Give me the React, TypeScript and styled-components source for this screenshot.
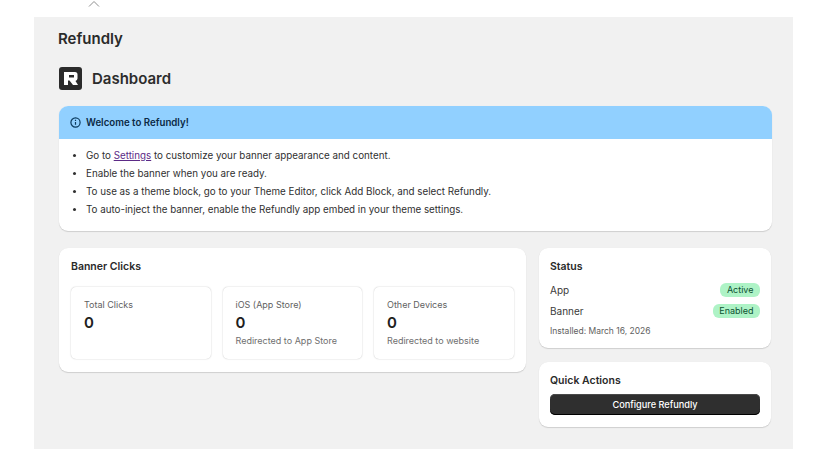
import styled, { createGlobalStyle } from 'styled-components';

const GlobalStyle = createGlobalStyle`
  html, body {
    margin: 0;
    padding: 0;
    background: #ffffff;
    font-family: Inter, "Liberation Sans", sans-serif;
    color: #303030;
  }
`;

const Page = styled.div`
  width: 828px;
  height: 466px;
  overflow: hidden;
  box-sizing: border-box;
  padding: 0 35px 17px 34px;
  display: flex;
  flex-direction: column;
`;

const TopBar = styled.div`
  height: 17px;
  padding-left: 54px;
  display: flex;
  align-items: flex-start;
  color: #8a8a8a;
`;

const Frame = styled.main`
  flex: 1;
  background: #f1f1f1;
  padding: 12px 21px 0 25px;
  display: flex;
  flex-direction: column;
`;

const AppTitle = styled.h1`
  margin: 0 0 0 -1px;
  font-size: 15px;
  line-height: 20px;
  font-weight: 600;
  color: #2a2a2a;
`;

const PageHeader = styled.div`
  margin-top: 17px;
  display: flex;
  align-items: center;
  gap: 10px;
  height: 24px;
`;

const PageTitle = styled.h2`
  margin: 0;
  font-size: 15px;
  font-weight: 600;
  color: #2c2c2c;
`;

const Card = styled.section`
  background: #ffffff;
  border-radius: 9px;
  box-shadow: 0 1px 1px rgba(0, 0, 0, 0.14), 0 0 1px rgba(0, 0, 0, 0.06);
  overflow: hidden;
`;

const Banner = styled(Card)`
  margin-top: 16px;
  height: 125px;
`;

const BannerHead = styled.div`
  height: 33px;
  background: #91d0ff;
  display: flex;
  align-items: center;
  gap: 5px;
  padding-left: 11px;
  font-size: 9.7px;
  font-weight: 600;
  color: #0b2a45;
`;

const Steps = styled.ul`
  margin: 0;
  padding: 8px 0 0 27px;
  font-size: 9.8px;
  line-height: 18px;
  color: #303030;
`;

const Step = styled.li`
  height: 18px;
  white-space: nowrap;
`;

const SettingsLink = styled.a`
  color: #5c2a86;
  text-decoration: underline;
`;

const Columns = styled.div`
  margin-top: 17px;
  display: grid;
  grid-template-columns: 467px 232px;
  gap: 13px;
  align-items: start;
`;

const ClicksCard = styled(Card)`
  height: 124px;
  box-sizing: border-box;
  padding: 12px;
`;

const CardTitle = styled.h3`
  margin: 0;
  font-size: 10.5px;
  line-height: 14px;
  font-weight: 600;
  color: #2a2a2a;
`;

const Stats = styled.div`
  margin-top: 13px;
  display: grid;
  grid-template-columns: repeat(3, 139.5px);
  gap: 12px;
`;

const Stat = styled.div`
  height: 72px;
  box-sizing: border-box;
  padding: 12px 12px 0 13px;
  background: #ffffff;
  border-radius: 5px;
  box-shadow: 0 0 1.5px rgba(0, 0, 0, 0.28);
`;

const StatLabel = styled.div`
  font-size: 9px;
  line-height: 12px;
  color: #616161;
`;

const StatValue = styled.div`
  margin-top: 1px;
  font-size: 15px;
  line-height: 22px;
  font-weight: 600;
  color: #202020;
`;

const StatNote = styled.div`
  margin-top: 1px;
  font-size: 9px;
  line-height: 12px;
  color: #6f6f6f;
`;

const SideColumn = styled.div`
  display: flex;
  flex-direction: column;
  gap: 14px;
`;

const StatusCard = styled(Card)`
  height: 100px;
  box-sizing: border-box;
  padding: 12px 11px 0 11px;
`;

const StatusRow = styled.div`
  display: flex;
  justify-content: space-between;
  align-items: center;
  height: 21px;
  font-size: 10px;
  color: #3a3a3a;
`;

const StatusRows = styled.div`
  margin-top: 5px;
`;

const Pill = styled.span`
  background: #aef3c6;
  color: #0c5132;
  font-size: 9px;
  line-height: 14px;
  padding: 0 6.500px;
  border-radius: 6px;
`;

const Installed = styled.div`
  margin-top: 4px;
  font-size: 8.5px;
  line-height: 12px;
  color: #616161;
`;

const ActionsCard = styled(Card)`
  height: 65px;
  box-sizing: border-box;
  padding: 12px 11px 0 11px;
`;

const ConfigureButton = styled.button`
  display: block;
  width: 100%;
  height: 21px;
  margin-top: 6px;
  padding: 0;
  border: 0;
  border-radius: 5px;
  background: #2f2f2f;
  box-shadow: inset 0 -1px 0 #000000, inset 0 1px 0 #4a4a4a;
  color: #ffffff;
  font-family: inherit;
  font-size: 9.2px;
  font-weight: 500;
`;

const Logo = () => (
  <svg width="23" height="23" viewBox="0 0 23 23" aria-hidden="true">
    <rect width="23" height="23" rx="3" fill="#2b2b2b" />
    <path d="M5 5h11a2.500 2.500 0 0 1 2.500 2.500v4a2.500 2.500 0 0 1-2 2.400L19 18h-5l-3.500-4.500H9V18H5z" fill="#ffffff" />
    <path d="M10 8h5v2.500h-5z" fill="#2b2b2b" />
  </svg>
);

const InfoIcon = () => (
  <svg width="11" height="11" viewBox="0 0 11 11" fill="none" stroke="#0b3a5e" strokeWidth="1.200" aria-hidden="true">
    <circle cx="5.500" cy="5.500" r="4.600" />
    <path d="M5.500 5v2.800M5.500 2.800v1.100" />
  </svg>
);

const Chevron = () => (
  <svg width="12" height="8" viewBox="0 0 12 8" fill="none" stroke="#8f8f8f" strokeWidth="1" aria-hidden="true">
    <path d="M1 6.500 6 1.500l5 5" />
  </svg>
);

const stats = [
  { label: 'Total Clicks', value: '0', note: '' },
  { label: 'iOS (App Store)', value: '0', note: 'Redirected to App Store' },
  { label: 'Other Devices', value: '0', note: 'Redirected to website' },
];

export default function App() {
  return (
    <>
      <GlobalStyle />
      <Page>
        <TopBar>
          <Chevron />
        </TopBar>
        <Frame>
          <AppTitle>Refundly</AppTitle>
          <PageHeader>
            <Logo />
            <PageTitle>Dashboard</PageTitle>
          </PageHeader>
          <Banner>
            <BannerHead>
              <InfoIcon />
              Welcome to Refundly!
            </BannerHead>
            <Steps>
              <Step>
                Go to <SettingsLink href="#">Settings</SettingsLink> to customize your banner appearance and content.
              </Step>
              <Step>Enable the banner when you are ready.</Step>
              <Step>To use as a theme block, go to your Theme Editor, click Add Block, and select Refundly.</Step>
              <Step>To auto-inject the banner, enable the Refundly app embed in your theme settings.</Step>
            </Steps>
          </Banner>
          <Columns>
            <ClicksCard>
              <CardTitle>Banner Clicks</CardTitle>
              <Stats>
                {stats.map((s) => (
                  <Stat key={s.label}>
                    <StatLabel>{s.label}</StatLabel>
                    <StatValue>{s.value}</StatValue>
                    {s.note && <StatNote>{s.note}</StatNote>}
                  </Stat>
                ))}
              </Stats>
            </ClicksCard>
            <SideColumn>
              <StatusCard>
                <CardTitle>Status</CardTitle>
                <StatusRows>
                  <StatusRow>
                    App <Pill>Active</Pill>
                  </StatusRow>
                  <StatusRow>
                    Banner <Pill>Enabled</Pill>
                  </StatusRow>
                </StatusRows>
                <Installed>Installed: March 16, 2026</Installed>
              </StatusCard>
              <ActionsCard>
                <CardTitle>Quick Actions</CardTitle>
                <ConfigureButton>Configure Refundly</ConfigureButton>
              </ActionsCard>
            </SideColumn>
          </Columns>
        </Frame>
      </Page>
    </>
  );
}
